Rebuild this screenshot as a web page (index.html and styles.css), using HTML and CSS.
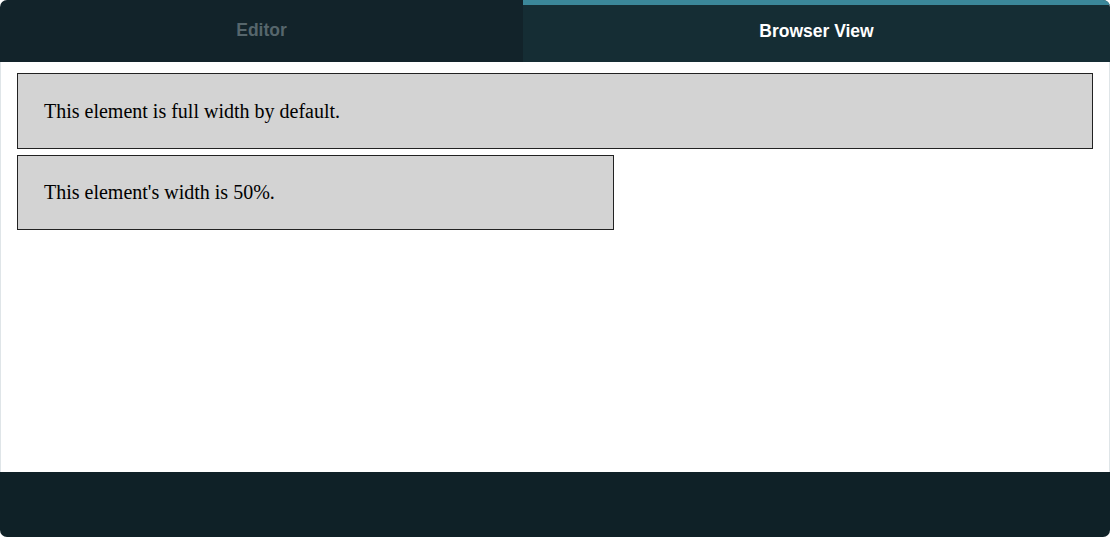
FILE: index.html
```html
<!DOCTYPE html>
<html>
<head>
<meta charset="utf-8">
<link rel="stylesheet" href="styles.css">
</head>
<body>
<div class="frame">
  <div class="tabs">
    <div class="tab tab-editor">Editor</div>
    <div class="tab tab-browser">Browser View</div>
  </div>
  <div class="view">
    <div class="box">This element is full width by default.</div>
    <div class="box half">This element's width is 50%.</div>
  </div>
  <div class="footer"></div>
</div>
</body>
</html>
```
FILE: styles.css
```css
html, body {
  margin: 0;
  padding: 0;
  background: #ffffff;
}
.frame {
  width: 1110px;
  height: 537px;
  display: flex;
  flex-direction: column;
  border-radius: 7px;
  overflow: hidden;
  background: #ffffff;
}
.tabs {
  display: flex;
  height: 62px;
  flex: none;
}
.tab {
  display: flex;
  align-items: center;
  justify-content: center;
  font-family: "Liberation Sans", Arial, sans-serif;
  font-weight: bold;
  font-size: 17.5px;
  box-sizing: border-box;
}
.tab-editor {
  width: 523px;
  background: #12232a;
  color: #56666c;
  padding-bottom: 2px;
}
.tab-browser {
  flex: 1;
  background: #152d34;
  color: #ffffff;
  border-top: 5px solid #3b8799;
  padding-bottom: 5px;
}
.view {
  flex: 1;
  border-left: 1px solid #dfe5e8;
  border-right: 1px solid #dfe5e8;
  padding: 11px 16px 0 16px;
  display: flex;
  flex-direction: column;
  align-items: flex-start;
  gap: 6px;
}
.box {
  align-self: stretch;
  background: #d3d3d3;
  border: 1px solid #222222;
  padding: 25px 25px 25px 26px;
  font-family: "Liberation Serif", "Times New Roman", serif;
  font-size: 20px;
  line-height: 24px;
  color: #000000;
}
.box.half {
  align-self: flex-start;
  width: 544px;
  padding-top: 24px;
}
.footer {
  height: 65px;
  flex: none;
  background: #0f2127;
}
```
